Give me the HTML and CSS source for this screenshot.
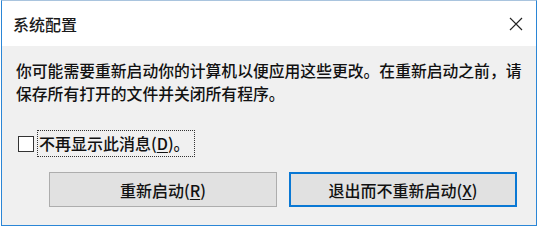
FILE: index.html
```html
<!DOCTYPE html>
<html lang="zh-CN">
<head>
<meta charset="utf-8">
<title>系统配置</title>
<link rel="stylesheet" href="styles.css">
</head>
<body>
<div class="window">
  <div class="titlebar">
    <span class="title">系统配置</span>
    <span class="close">
      <svg width="14" height="14" viewBox="0 0 14 14"><path d="M1 1 L13 13 M13 1 L1 13" stroke="#222" stroke-width="1.2" fill="none"/></svg>
    </span>
  </div>
  <div class="content">
    <p class="message">你可能需要重新启动你的计算机以便应用这些更改。在重新启动之前，请保存所有打开的文件并关闭所有程序。</p>
    <label class="check">
      <span class="box"></span>
      <span class="check-label">不再显示此消息(<u>D</u>)。</span>
    </label>
    <div class="buttons">
      <button class="btn">重新启动(<u>R</u>)</button>
      <button class="btn default">退出而不重新启动(<u>X</u>)</button>
    </div>
  </div>
</div>
</body>
</html>
```

FILE: styles.css
```css
html, body {
  margin: 0;
  padding: 0;
  background: #ffffff;
}
body {
  font-family: "Noto Sans CJK SC", "Microsoft YaHei", sans-serif;
  color: #111;
}
.window {
  margin: 0 0 0 1px;
  width: 536px;
  height: 226px;
  box-sizing: border-box;
  border: 1px solid #2b86d6;
  border-top-color: #a9c4de;
  display: flex;
  flex-direction: column;
}
.titlebar {
  height: 45px;
  background: #fff;
  display: flex;
  align-items: center;
  justify-content: space-between;
  padding: 0 13px 0 11px;
  flex-shrink: 0;
}
.title {
  font-size: 16px;
  color: #1a1a1a;
  font-weight: 500;
}
.close {
  display: flex;
  align-items: center;
}
.content {
  flex: 1;
  background: #f0f0f0;
  padding: 13px 6px 0 14px;
}
.message {
  margin: 0;
  font-size: 15.8px;
  line-height: 23px;
  color: #111;
  font-weight: 500;
}
.check {
  display: flex;
  align-items: center;
  margin-top: 25px;
  margin-left: 2px;
  height: 27px;
}
.box {
  width: 14px;
  height: 14px;
  border: 1px solid #333;
  background: #fff;
}
.check-label {
  margin-left: 3px;
  padding: 0 4px 0 1px;
  border: 1px dotted #333;
  font-size: 16px;
  line-height: 25px;
  font-weight: 500;
}
.buttons {
  display: flex;
  gap: 12px;
  margin-top: 15px;
  margin-left: 33px;
}
.btn {
  width: 228px;
  height: 35px;
  box-sizing: border-box;
  background: #e1e1e1;
  border: 1px solid #adadad;
  font-family: inherit;
  font-size: 16px;
  font-weight: 500;
  color: #111;
  padding: 0;
}
.btn.default {
  border: 2px solid #0a78d4;
}
u {
  text-decoration-thickness: 1px;
  text-underline-offset: 2px;
}
```
